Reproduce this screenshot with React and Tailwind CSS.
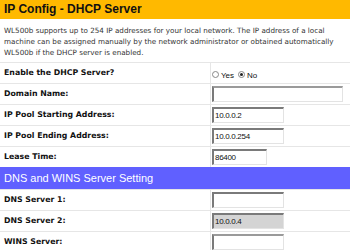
import React from "react";

function Input({ value = "", w, disabled, dotted }) {
  return (
    <div
      className={`h-[16px] border-t-2 border-l-2 border-b border-r border-l-[#7a7a7a] border-b-[#e3e3e3] border-r-[#e3e3e3] ${dotted ? "border-t-[#9a9a9a]" : "border-t-[#7a7a7a]"} ${disabled ? "bg-[#d4d4d4]" : "bg-white"} flex items-center pl-[1px] text-[8px] text-[#111] leading-none`}
      style={{ width: w, fontFamily: '"Liberation Sans", Arial, sans-serif', letterSpacing: "-0.3px" }}
    >
      {value}
    </div>
  );
}

function Row({ label, children }) {
  return (
    <div className="flex h-[21px] border-t border-[#e6e6e6]">
      <div className="w-[211px] shrink-0 border-r border-[#e6e6e6] flex items-center pl-[4px] text-[7.8px] font-bold text-[#111]"
        style={{ fontFamily: '"DejaVu Sans", Verdana, sans-serif' }}>
        {label}
      </div>
      <div className="flex-1 flex items-center pl-[1px]">{children}</div>
    </div>
  );
}

export default function App() {
  return (
    <div className="w-[350px] h-[250px] overflow-hidden bg-white">
      <div className="h-[19px] bg-[#ffb900] pl-[4px] pt-[1px] text-[12px] font-bold text-[#111] leading-[16px]"
        style={{ fontFamily: '"Liberation Sans", Arial, sans-serif' }}>
        IP Config - DHCP Server
      </div>
      <div className="px-[4px] pt-[6px] pb-[4px] text-[7.2px] leading-[11px] text-[#333]"
        style={{ fontFamily: '"DejaVu Sans", Verdana, sans-serif' }}>
        WL500b supports up to 254 IP addresses for your local network. The IP address of a local machine can be assigned manually by the network administrator or obtained automatically WL500b if the DHCP server is enabled.
      </div>
      <Row label="Enable the DHCP Server?">
        <div className="flex items-center gap-[2px] text-[8px] text-[#111] pt-[3px]" style={{ fontFamily: '"Liberation Sans", Arial, sans-serif' }}>
          <span className="w-[7px] h-[7px] rounded-full border border-[#888] bg-white inline-block"></span>
          <span className="mt-[3px]">Yes</span>
          <span className="w-[7px] h-[7px] rounded-full border border-[#888] bg-white inline-flex items-center justify-center ml-[2px]">
            <span className="w-[3px] h-[3px] rounded-full bg-[#222]"></span>
          </span>
          <span className="mt-[3px]">No</span>
        </div>
      </Row>
      <Row label="Domain Name:"><Input w={131} dotted /></Row>
      <Row label="IP Pool Starting Address:"><Input w={72} value="10.0.0.2" /></Row>
      <Row label="IP Pool Ending Address:"><Input w={72} value="10.0.0.254" /></Row>
      <Row label="Lease Time:"><Input w={55} value="86400" /></Row>
      <div className="h-[22px] bg-[#6060ff] pl-[4px] flex items-center text-[11px] text-white"
        style={{ fontFamily: '"Liberation Sans", Arial, sans-serif' }}>
        DNS and WINS Server Setting
      </div>
      <Row label="DNS Server 1:"><Input w={72} /></Row>
      <Row label="DNS Server 2:"><Input w={72} value="10.0.0.4" disabled /></Row>
      <Row label="WINS Server:"><Input w={72} dotted /></Row>
    </div>
  );
}
